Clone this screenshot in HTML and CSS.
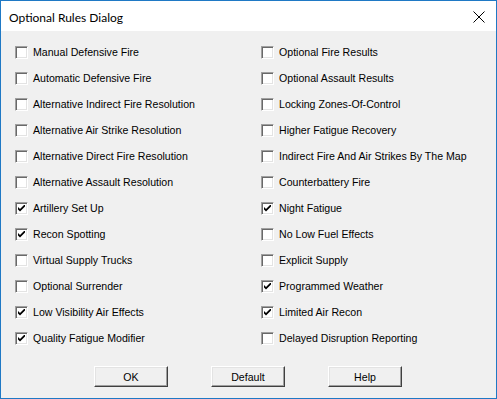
FILE: index.html
```html
<!DOCTYPE html>
<html>
<head>
<meta charset="utf-8">
<link rel="stylesheet" href="styles.css">
</head>
<body>
<div class="window">
  <div class="titlebar">
    <span class="title">Optional Rules Dialog</span>
    <svg class="close" width="12" height="12" viewBox="0 0 12 12"><path d="M0.5 0.5 L11.5 11.5 M11.5 0.5 L0.5 11.5" stroke="#000" stroke-width="1" fill="none"/></svg>
  </div>
  <div class="content">
    <div class="grid">
      <label class="opt"><span class="box"></span><span class="lbl">Manual Defensive Fire</span></label>
      <label class="opt"><span class="box"></span><span class="lbl">Optional Fire Results</span></label>
      <label class="opt"><span class="box"></span><span class="lbl">Automatic Defensive Fire</span></label>
      <label class="opt"><span class="box"></span><span class="lbl">Optional Assault Results</span></label>
      <label class="opt"><span class="box"></span><span class="lbl">Alternative Indirect Fire Resolution</span></label>
      <label class="opt"><span class="box"></span><span class="lbl">Locking Zones-Of-Control</span></label>
      <label class="opt"><span class="box"></span><span class="lbl">Alternative Air Strike Resolution</span></label>
      <label class="opt"><span class="box"></span><span class="lbl">Higher Fatigue Recovery</span></label>
      <label class="opt"><span class="box"></span><span class="lbl">Alternative Direct Fire Resolution</span></label>
      <label class="opt"><span class="box"></span><span class="lbl">Indirect Fire And Air Strikes By The Map</span></label>
      <label class="opt"><span class="box"></span><span class="lbl">Alternative Assault Resolution</span></label>
      <label class="opt"><span class="box"></span><span class="lbl">Counterbattery Fire</span></label>
      <label class="opt"><span class="box checked"><svg viewBox="0 0 7 7" width="7" height="7"><path d="M0 2 L0 4.5 L2 6.5 L7 1.5 L7 -1 L2 4 Z" fill="#000"/></svg></span><span class="lbl">Artillery Set Up</span></label>
      <label class="opt"><span class="box checked"><svg viewBox="0 0 7 7" width="7" height="7"><path d="M0 2 L0 4.5 L2 6.5 L7 1.5 L7 -1 L2 4 Z" fill="#000"/></svg></span><span class="lbl">Night Fatigue</span></label>
      <label class="opt"><span class="box checked"><svg viewBox="0 0 7 7" width="7" height="7"><path d="M0 2 L0 4.5 L2 6.5 L7 1.5 L7 -1 L2 4 Z" fill="#000"/></svg></span><span class="lbl">Recon Spotting</span></label>
      <label class="opt"><span class="box"></span><span class="lbl">No Low Fuel Effects</span></label>
      <label class="opt"><span class="box"></span><span class="lbl">Virtual Supply Trucks</span></label>
      <label class="opt"><span class="box"></span><span class="lbl">Explicit Supply</span></label>
      <label class="opt"><span class="box"></span><span class="lbl">Optional Surrender</span></label>
      <label class="opt"><span class="box checked"><svg viewBox="0 0 7 7" width="7" height="7"><path d="M0 2 L0 4.5 L2 6.5 L7 1.5 L7 -1 L2 4 Z" fill="#000"/></svg></span><span class="lbl">Programmed Weather</span></label>
      <label class="opt"><span class="box checked"><svg viewBox="0 0 7 7" width="7" height="7"><path d="M0 2 L0 4.5 L2 6.5 L7 1.5 L7 -1 L2 4 Z" fill="#000"/></svg></span><span class="lbl">Low Visibility Air Effects</span></label>
      <label class="opt"><span class="box checked"><svg viewBox="0 0 7 7" width="7" height="7"><path d="M0 2 L0 4.5 L2 6.5 L7 1.5 L7 -1 L2 4 Z" fill="#000"/></svg></span><span class="lbl">Limited Air Recon</span></label>
      <label class="opt"><span class="box checked"><svg viewBox="0 0 7 7" width="7" height="7"><path d="M0 2 L0 4.5 L2 6.5 L7 1.5 L7 -1 L2 4 Z" fill="#000"/></svg></span><span class="lbl">Quality Fatigue Modifier</span></label>
      <label class="opt"><span class="box"></span><span class="lbl">Delayed Disruption Reporting</span></label>
    </div>
    <div class="buttons">
      <button class="btn">OK</button>
      <button class="btn">Default</button>
      <button class="btn">Help</button>
    </div>
  </div>
</div>
</body>
</html>
```
FILE: styles.css
```css
html, body {
  margin: 0;
  padding: 0;
  background: #f0f0f0;
}
.window {
  width: 497px;
  height: 399px;
  box-sizing: border-box;
  border: 1px solid #1f79c5;
  background: #f0f0f0;
  display: flex;
  flex-direction: column;
}
.titlebar {
  height: 30px;
  background: #ffffff;
  display: flex;
  align-items: center;
  justify-content: space-between;
  padding: 0 11px 0 8px;
  flex-shrink: 0;
}
.title {
  font-family: "Lato", "Noto Sans", sans-serif;
  font-size: 12px;
  color: #000;
  position: relative;
  top: 1px;
}
.close {
  display: block;
  position: relative;
  top: 1px;
}
.content {
  padding: 8px 0 0 14px;
}
.grid {
  display: grid;
  grid-template-columns: 246px 1fr;
  grid-auto-rows: 26px;
}
.opt {
  display: flex;
  align-items: center;
  font-family: "Liberation Sans", Arial, sans-serif;
  font-size: 10.6px;
  color: #000;
}
.box {
  width: 13px;
  height: 13px;
  box-sizing: border-box;
  background: #fff;
  border-top: 1px solid #a0a0a0;
  border-left: 1px solid #a0a0a0;
  border-right: 1px solid #ffffff;
  border-bottom: 1px solid #ffffff;
  box-shadow: inset 1px 1px 0 #696969, inset -1px -1px 0 #e3e3e3;
  display: flex;
  align-items: center;
  justify-content: center;
  margin-right: 5px;
  flex-shrink: 0;
}
.box svg {
  display: block;
}
.lbl {
  white-space: nowrap;
}
.buttons {
  display: flex;
  gap: 43px;
  padding-left: 79px;
  margin-top: 15px;
}
.btn {
  width: 74px;
  height: 21px;
  padding: 0;
  margin: 0;
  font-family: "Liberation Sans", Arial, sans-serif;
  font-size: 10.6px;
  color: #000;
  background: #f0f0f0;
  border-top: 1px solid #ffffff;
  border-left: 1px solid #ffffff;
  border-right: 1px solid #404040;
  border-bottom: 1px solid #404040;
  box-shadow: inset -1px -1px 0 #a0a0a0, inset 1px 1px 0 #e3e3e3;
}
```
